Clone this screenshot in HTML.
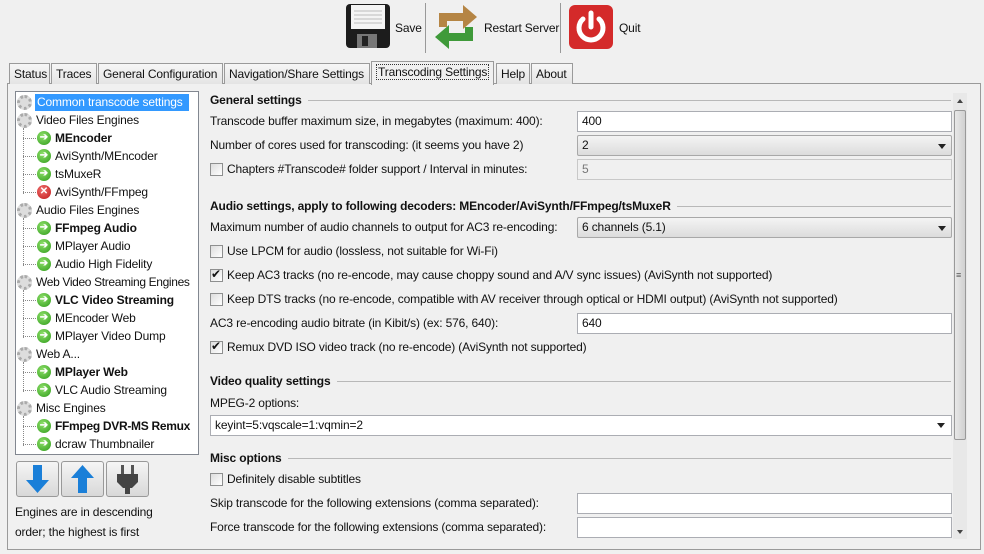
<!DOCTYPE html>
<html><head><meta charset="utf-8"><style>
*{box-sizing:border-box;margin:0;padding:0}
body{width:984px;height:554px;background:#f0f0f0;font-family:"Liberation Sans",sans-serif;font-size:12px;letter-spacing:-0.15px;color:#111;position:relative;overflow:hidden}
.a{position:absolute}
.t{position:absolute;white-space:nowrap;line-height:14px}
.tab{position:absolute;top:63px;height:21px;border:1px solid #9a9a9a;border-bottom:none;background:linear-gradient(#f6f6f6,#e4e4e4);padding:3px 4px 0;white-space:nowrap}
.inp{position:absolute;height:21px;background:#fff;border:1px solid #abadb3;padding:3px 4px;line-height:13px}
.dis{background:#f0f0f0;color:#777;border-color:#c8c8c8}
.cmb{position:absolute;height:21px;border:1px solid #a8a8a8;border-radius:2px;background:linear-gradient(#f4f4f4,#dcdcdc);padding:3px 4px;line-height:13px}
.cmb:after{content:"";position:absolute;right:5px;top:8px;border:4px solid transparent;border-top:5px solid #222}
.cb{position:absolute;width:13px;height:13px;border:1px solid #8e8f8f;background:linear-gradient(135deg,#ddd,#fff)}
.hd{position:absolute;left:210px;font-weight:bold;white-space:nowrap;background:#f0f0f0;padding-right:6px;line-height:14px}
.ln{position:absolute;left:210px;width:741px;height:1px;background:#b8b8b8}
.ic{position:absolute;left:37px;width:14px;height:14px;border-radius:50%;color:#fff;font-size:10px;line-height:14px;text-align:center;font-weight:bold;letter-spacing:0}
.g{background:radial-gradient(circle at 40% 35%,#8fe06a,#2e9b1a)}
.r{background:radial-gradient(circle at 40% 35%,#f07070,#c01818)}
.gear{position:absolute;left:17px;width:15px;height:15px;border-radius:50%;border:3px dotted #aaa;background:#ddd}
.dot{position:absolute;border-left:1px dotted #888}
.hz{position:absolute;left:23px;width:13px;border-top:1px dotted #888}
.tr{position:absolute;left:55px;white-space:nowrap;line-height:14px}
.btn{position:absolute;top:461px;width:43px;height:36px;border:1px solid #999;border-radius:3px;background:linear-gradient(#f5f5f5,#d8d8d8)}
</style></head><body>
<svg class="a" style="left:345px;top:3px" width="46" height="46" viewBox="0 0 46 46"><rect x="1" y="1" width="44" height="44" rx="4" fill="#1c1c1c"/><rect x="6" y="2" width="34" height="24" fill="#f4f4f4"/><g stroke="#bbb"><line x1="9" y1="8" x2="37" y2="8"/><line x1="9" y1="12" x2="37" y2="12"/><line x1="9" y1="16" x2="37" y2="16"/><line x1="9" y1="20" x2="37" y2="20"/></g><rect x="12" y="31" width="20" height="14" fill="#777"/><rect x="17" y="33" width="6" height="10" fill="#222"/></svg>
<div class="t" style="left:395px;top:21px">Save</div>
<div class="a" style="left:425px;top:3px;width:1px;height:50px;background:#999"></div>
<svg class="a" style="left:433px;top:3px" width="46" height="48" viewBox="0 0 46 48"><path d="M6 24 V10 H30 V2 L44 14 L30 26 V18 H14 V24 Z" fill="#b58544"/><path d="M40 24 V38 H16 V46 L2 34 L16 22 V30 H32 V24 Z" fill="#3f9a3a"/></svg>
<div class="t" style="left:484px;top:21px">Restart Server</div>
<div class="a" style="left:560px;top:3px;width:1px;height:50px;background:#999"></div>
<svg class="a" style="left:568px;top:4px" width="46" height="46" viewBox="0 0 46 46"><rect x="1" y="1" width="44" height="44" rx="6" fill="#d42a2a"/><path d="M15 15 A12 12 0 1 0 31 15" fill="none" stroke="#fff" stroke-width="5" stroke-linecap="round"/><line x1="23" y1="9" x2="23" y2="23" stroke="#fff" stroke-width="5" stroke-linecap="round"/></svg>
<div class="t" style="left:619px;top:21px">Quit</div>
<div class="a" style="left:7px;top:83px;width:974px;height:467px;border:1px solid #9a9a9a;background:#f0f0f0"></div>
<div class="tab" style="left:9px;width:41px">Status</div>
<div class="tab" style="left:51px;width:46px">Traces</div>
<div class="tab" style="left:98px;width:125px">General Configuration</div>
<div class="tab" style="left:224px;width:146px">Navigation/Share Settings</div>
<div class="tab" style="left:371px;top:61px;height:24px;width:123px;background:#f0f0f0"><span style="border:1px dotted #333;padding:0 1px">Transcoding Settings</span></div>
<div class="tab" style="left:496px;width:34px">Help</div>
<div class="tab" style="left:531px;width:42px">About</div>
<div class="a" style="left:15px;top:91px;width:184px;height:364px;border:1px solid #828790;background:#fff"></div>
<div class="a" style="left:35px;top:94px;width:154px;height:17px;background:#3399ff"></div>
<div class="t" style="left:37px;top:95px;color:#fff">Common transcode settings</div>
<div class="gear" style="top:95px"></div>
<div class="gear" style="top:113px"></div><div class="t" style="left:36px;top:113px">Video Files Engines</div>
<div class="dot" style="left:23px;top:128px;height:66px"></div>
<div class="hz" style="top:138px"></div><div class="ic g" style="top:131px">➔</div><div class="tr" style="top:131px;font-weight:bold">MEncoder</div>
<div class="hz" style="top:156px"></div><div class="ic g" style="top:149px">➔</div><div class="tr" style="top:149px">AviSynth/MEncoder</div>
<div class="hz" style="top:174px"></div><div class="ic g" style="top:167px">➔</div><div class="tr" style="top:167px">tsMuxeR</div>
<div class="hz" style="top:192px"></div><div class="ic r" style="top:185px">✕</div><div class="tr" style="top:185px">AviSynth/FFmpeg</div>
<div class="gear" style="top:203px"></div><div class="t" style="left:36px;top:203px">Audio Files Engines</div>
<div class="dot" style="left:23px;top:218px;height:48px"></div>
<div class="hz" style="top:228px"></div><div class="ic g" style="top:221px">➔</div><div class="tr" style="top:221px;font-weight:bold">FFmpeg Audio</div>
<div class="hz" style="top:246px"></div><div class="ic g" style="top:239px">➔</div><div class="tr" style="top:239px">MPlayer Audio</div>
<div class="hz" style="top:264px"></div><div class="ic g" style="top:257px">➔</div><div class="tr" style="top:257px">Audio High Fidelity</div>
<div class="gear" style="top:275px"></div><div class="t" style="left:36px;top:275px;letter-spacing:-0.35px">Web Video Streaming Engines</div>
<div class="dot" style="left:23px;top:290px;height:48px"></div>
<div class="hz" style="top:300px"></div><div class="ic g" style="top:293px">➔</div><div class="tr" style="top:293px;font-weight:bold">VLC Video Streaming</div>
<div class="hz" style="top:318px"></div><div class="ic g" style="top:311px">➔</div><div class="tr" style="top:311px">MEncoder Web</div>
<div class="hz" style="top:336px"></div><div class="ic g" style="top:329px">➔</div><div class="tr" style="top:329px">MPlayer Video Dump</div>
<div class="gear" style="top:347px"></div><div class="t" style="left:36px;top:347px">Web A...</div>
<div class="dot" style="left:23px;top:362px;height:30px"></div>
<div class="hz" style="top:372px"></div><div class="ic g" style="top:365px">➔</div><div class="tr" style="top:365px;font-weight:bold">MPlayer Web</div>
<div class="hz" style="top:390px"></div><div class="ic g" style="top:383px">➔</div><div class="tr" style="top:383px">VLC Audio Streaming</div>
<div class="gear" style="top:401px"></div><div class="t" style="left:36px;top:401px">Misc Engines</div>
<div class="dot" style="left:23px;top:416px;height:30px"></div>
<div class="hz" style="top:426px"></div><div class="ic g" style="top:419px">➔</div><div class="tr" style="top:419px;font-weight:bold;letter-spacing:-0.3px">FFmpeg DVR-MS Remux</div>
<div class="hz" style="top:444px"></div><div class="ic g" style="top:437px">➔</div><div class="tr" style="top:437px">dcraw Thumbnailer</div>
<div class="btn" style="left:16px"><svg width="41" height="34" viewBox="0 0 41 34"><path d="M16 3 H25 V18 H32 L20.5 31 L9 18 H16 Z" fill="#1a7fd8"/></svg></div>
<div class="btn" style="left:61px"><svg width="41" height="34" viewBox="0 0 41 34"><path d="M16 31 H25 V16 H32 L20.5 3 L9 16 H16 Z" fill="#1a7fd8"/></svg></div>
<div class="btn" style="left:106px"><svg width="41" height="34" viewBox="0 0 41 34"><rect x="14" y="3" width="3" height="9" fill="#555"/><rect x="24" y="3" width="3" height="9" fill="#555"/><path d="M10 12 H31 V20 L25 26 H16 L10 20 Z" fill="#444"/><rect x="18" y="26" width="5" height="6" fill="#444"/></svg></div>
<div class="t" style="left:15px;top:505px">Engines are in descending</div>
<div class="t" style="left:15px;top:525px">order; the highest is first</div>
<div class="ln" style="top:100px"></div><div class="hd" style="top:93px">General settings</div>
<div class="t" style="left:210px;top:114px">Transcode buffer maximum size, in megabytes (maximum: 400):</div>
<div class="inp" style="left:577px;top:111px;width:375px">400</div>
<div class="t" style="left:210px;top:138px">Number of cores used for transcoding: (it seems you have 2)</div>
<div class="cmb" style="left:577px;top:135px;width:375px">2</div>
<div class="cb" style="left:210px;top:163px"></div><div class="t" style="left:227px;top:162px">Chapters #Transcode# folder support / Interval in minutes:</div>
<div class="inp dis" style="left:577px;top:159px;width:375px">5</div>
<div class="ln" style="top:206px"></div><div class="hd" style="top:199px">Audio settings, apply to following decoders: MEncoder/AviSynth/FFmpeg/tsMuxeR</div>
<div class="t" style="left:210px;top:220px">Maximum number of audio channels to output for AC3 re-encoding:</div>
<div class="cmb" style="left:577px;top:217px;width:375px">6 channels (5.1)</div>
<div class="cb" style="left:210px;top:245px"></div><div class="t" style="left:227px;top:244px">Use LPCM for audio (lossless, not suitable for Wi-Fi)</div>
<div class="cb" style="left:210px;top:269px"></div><div class="t" style="left:211px;top:267px">✔</div><div class="t" style="left:227px;top:268px">Keep AC3 tracks (no re-encode, may cause choppy sound and A/V sync issues) (AviSynth not supported)</div>
<div class="cb" style="left:210px;top:293px"></div><div class="t" style="left:227px;top:292px">Keep DTS tracks (no re-encode, compatible with AV receiver through optical or HDMI output) (AviSynth not supported)</div>
<div class="t" style="left:210px;top:316px">AC3 re-encoding audio bitrate (in Kibit/s) (ex: 576, 640):</div>
<div class="inp" style="left:577px;top:313px;width:375px">640</div>
<div class="cb" style="left:210px;top:341px"></div><div class="t" style="left:211px;top:339px">✔</div><div class="t" style="left:227px;top:340px">Remux DVD ISO video track (no re-encode) (AviSynth not supported)</div>
<div class="ln" style="top:381px"></div><div class="hd" style="top:374px">Video quality settings</div>
<div class="t" style="left:210px;top:396px">MPEG-2 options:</div>
<div class="inp" style="left:210px;top:415px;width:742px">keyint=5:vqscale=1:vqmin=2</div>
<div class="a" style="left:937px;top:423px;border:4px solid transparent;border-top:5px solid #222"></div>
<div class="ln" style="top:458px"></div><div class="hd" style="top:451px">Misc options</div>
<div class="cb" style="left:210px;top:473px"></div><div class="t" style="left:227px;top:472px">Definitely disable subtitles</div>
<div class="t" style="left:210px;top:496px">Skip transcode for the following extensions (comma separated):</div>
<div class="inp" style="left:577px;top:493px;width:375px"></div>
<div class="t" style="left:210px;top:520px">Force transcode for the following extensions (comma separated):</div>
<div class="inp" style="left:577px;top:517px;width:375px"></div>
<div class="a" style="left:953px;top:93px;width:14px;height:446px;background:#e8e8e8"></div>
<div class="a" style="left:957px;top:99px;border:3px solid transparent;border-bottom:4px solid #444;border-top:none"></div>
<div class="a" style="left:954px;top:110px;width:12px;height:330px;border:1px solid #999;border-radius:2px;background:linear-gradient(90deg,#e8e8e8,#d0d0d0)"></div>
<div class="t" style="left:956px;top:268px;font-size:9px;color:#555">≡</div>
<div class="a" style="left:957px;top:530px;border:3px solid transparent;border-top:4px solid #444"></div>
</body></html>
